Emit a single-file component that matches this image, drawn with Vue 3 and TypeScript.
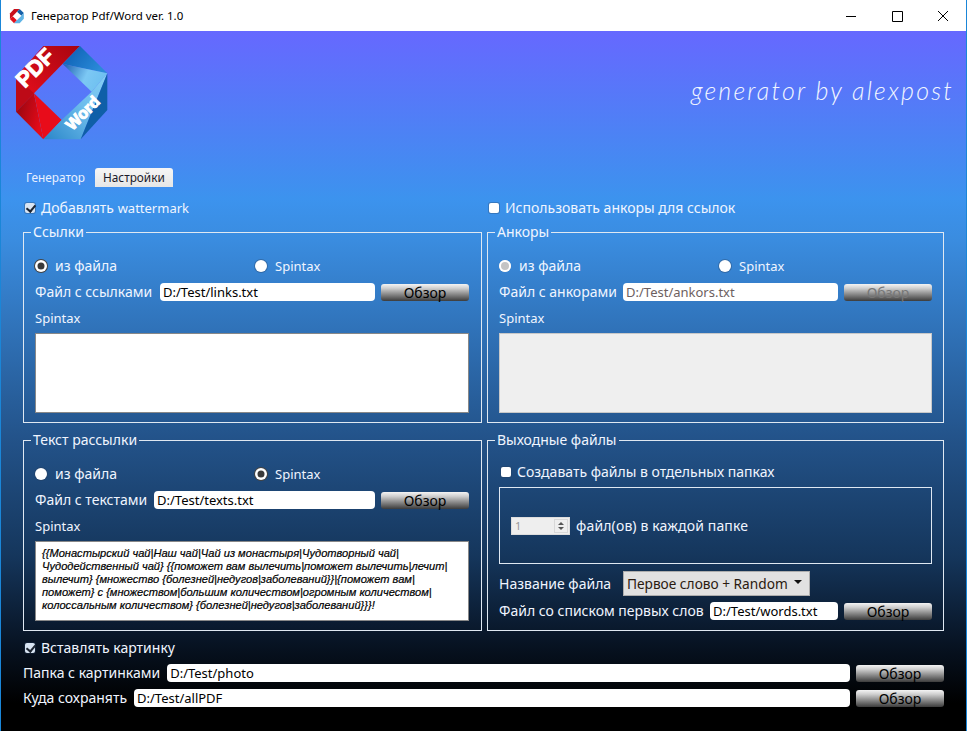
<script setup lang="ts">
const textContent = `{{Монастырский чай|Наш чай|Чай из монастыря|Чудотворный чай|
Чудодейственный чай} {{поможет вам вылечить|поможет вылечить|лечит|
вылечит} {множество {болезней|недугов|заболеваний}}|{поможет вам|
поможет} с {множеством|большим количеством|огромным количеством|
колоссальным количеством} {болезней|недугов|заболеваний}}}!`
const fileName = 'Первое слово + Random'
</script>

<template>
  <div class="win">
    <header class="titlebar">
      <svg class="appicon" viewBox="0 0 315 315">
        <path fill="#c8101c" d="M100 18H210L72 160 18 215V110Z" />
        <path fill="#e0101e" d="M18 215 72 160 155 240 100 298Z" />
        <path fill="#1560a8" d="M210 18 292 100 245 155 158 72Z" />
        <path fill="#5fb4e6" d="M292 100V210L210 298H100L155 240 245 155Z" />
      </svg>
      <span class="wintitle">Генератор Pdf/Word ver. 1.0</span>
      <div class="controls">
        <svg viewBox="0 0 46 30"><path d="M18 15.5H28" stroke="#000" fill="none" /></svg>
        <svg viewBox="0 0 46 30"><path d="M18.5 10.5H28.5V20.500H18.500Z" stroke="#000" fill="none" /></svg>
        <svg viewBox="0 0 46 30"><path d="M18 10 28 20M28 10 18 20" stroke="#000" fill="none" /></svg>
      </div>
    </header>

    <main class="main">
      <section class="hero">
        <svg class="logo" viewBox="0 0 315 315">
          <defs>
            <linearGradient id="r1" x1="0" y1="1" x2="1" y2="0">
              <stop offset="0" stop-color="#f0101e" />
              <stop offset="1" stop-color="#a80510" />
            </linearGradient>
            <linearGradient id="r2" x1="0" y1="0" x2="1" y2="0.4">
              <stop offset="0" stop-color="#8f0610" />
              <stop offset="1" stop-color="#e40a18" />
            </linearGradient>
            <linearGradient id="b1" x1="0" y1="0" x2="1" y2="0.5">
              <stop offset="0" stop-color="#0a5bb0" />
              <stop offset="1" stop-color="#2a8ad8" />
            </linearGradient>
            <linearGradient id="b2" x1="0" y1="0" x2="1" y2="0.3">
              <stop offset="0" stop-color="#1a5cae" />
              <stop offset="0.6" stop-color="#7cc8f4" />
              <stop offset="1" stop-color="#6ec0f0" />
            </linearGradient>
            <linearGradient id="b3" x1="0" y1="1" x2="1" y2="0">
              <stop offset="0" stop-color="#2a86c8" />
              <stop offset="0.55" stop-color="#6cbcec" />
              <stop offset="1" stop-color="#86d0f6" />
            </linearGradient>
          </defs>
          <path fill="url(#r1)" d="M100 18H210L72 160 18 215V110Z" />
          <path fill="#bd0a17" d="M18 110 72 160 18 215Z" />
          <path fill="url(#r2)" d="M18 215 72 160 100 298Z" />
          <path fill="#e80c1a" d="M72 160 155 240 100 298Z" />
          <path fill="url(#b1)" d="M210 18 292 100 158 72Z" />
          <path fill="url(#b2)" d="M158 72 292 100 245 155Z" />
          <path fill="url(#b3)" d="M292 100 212 298H100L155 240 245 155Z" />
          <path fill="#0f5fa8" d="M292 100V210L212 298Z" />
          <text class="pdf" transform="translate(44 146) rotate(-45)">PDF</text>
          <text class="word" transform="translate(187 274) rotate(-45)">Word</text>
        </svg>
        <p class="sign">generator by alexpost</p>
      </section>

      <nav class="tabs">
        <span class="tab">Генератор</span>
        <span class="tab active">Настройки</span>
      </nav>

      <div class="topchecks">
        <label class="check"><input type="checkbox" checked /><span>Добавлять <span class="latin">wattermark</span></span></label>
        <label class="check"><input type="checkbox" /><span>Использовать анкоры для ссылок</span></label>
      </div>

      <div class="groups">
        <fieldset class="group">
          <legend>Ссылки</legend>
          <div class="radios">
            <label class="radio"><input type="radio" name="a" checked /><span>из файла</span></label>
            <label class="radio"><input type="radio" name="a" /><span class="latin">Spintax</span></label>
          </div>
          <div class="filerow">
            <span class="label">Файл с ссылками</span>
            <input class="path w215" value="D:/Test/links.txt" />
            <button class="browse">Обзор</button>
          </div>
          <div class="caption latin">Spintax</div>
          <textarea class="area"></textarea>
        </fieldset>

        <fieldset class="group">
          <legend>Анкоры</legend>
          <div class="radios">
            <label class="radio off"><input type="radio" name="b" checked disabled /><span>из файла</span></label>
            <label class="radio"><input type="radio" name="b" disabled /><span class="latin">Spintax</span></label>
          </div>
          <div class="filerow">
            <span class="label">Файл с анкорами</span>
            <input class="path w215 muted" value="D:/Test/ankors.txt" disabled />
            <button class="browse" disabled>Обзор</button>
          </div>
          <div class="caption latin">Spintax</div>
          <textarea class="area" disabled></textarea>
        </fieldset>

        <fieldset class="group">
          <legend>Текст рассылки</legend>
          <div class="radios">
            <label class="radio"><input type="radio" name="c" /><span>из файла</span></label>
            <label class="radio"><input type="radio" name="c" checked /><span class="latin">Spintax</span></label>
          </div>
          <div class="filerow">
            <span class="label">Файл с текстами</span>
            <input class="path w221" value="D:/Test/texts.txt" />
            <button class="browse">Обзор</button>
          </div>
          <div class="caption latin">Spintax</div>
          <textarea class="area spin" :value="textContent"></textarea>
        </fieldset>

        <fieldset class="group output">
          <legend>Выходные файлы</legend>
          <label class="check inset"><input type="checkbox" /><span>Создавать файлы в отдельных папках</span></label>
          <div class="folderbox">
            <div class="spinner">
              <input value="1" disabled />
              <div class="arrows"><i class="up"></i><i class="down"></i></div>
            </div>
            <span class="label wide">файл(ов) в каждой папке</span>
          </div>
          <div class="namerow">
            <span class="namelabel">Название файла</span>
            <div class="selectwrap">
              <select><option>{{ fileName }}</option></select>
            </div>
          </div>
          <div class="filerow words">
            <span class="label">Файл со списком первых слов</span>
            <input class="path w128" value="D:/Test/words.txt" />
            <button class="browse">Обзор</button>
          </div>
        </fieldset>
      </div>

      <div class="bottom">
        <label class="check"><input type="checkbox" checked /><span>Вставлять картинку</span></label>
        <div class="filerow">
          <span class="label nogrow">Папка с картинками</span>
          <input class="path grow" value="D:/Test/photo" />
          <button class="browse">Обзор</button>
        </div>
        <div class="filerow">
          <span class="label nogrow">Куда сохранять</span>
          <input class="path grow" value="D:/Test/allPDF" />
          <button class="browse">Обзор</button>
        </div>
      </div>
    </main>
  </div>
</template>

<style>
html, body { margin: 0; background: #000; }
</style>

<style scoped>
* { box-sizing: border-box; }
.win {
  width: 967px;
  height: 731px;
  display: flex;
  flex-direction: column;
  border-left: 1px solid #1a86d8;
  border-right: 1px solid #1a86d8;
  font-family: "Noto Sans", "Liberation Sans", sans-serif;
  font-size: 14px;
  color: #f0f5ff;
  overflow: hidden;
}
.latin { font-size: 13px; }
.titlebar {
  height: 31px;
  flex: none;
  display: flex;
  align-items: center;
  background: #fff;
  color: #000;
  padding-left: 8px;
  font-size: 11.5px;
}
.appicon { width: 16px; height: 16px; margin-right: 6px; }
.wintitle { line-height: 31px; }
.controls { margin-left: auto; display: flex; margin-right: 0; }
.controls svg { width: 46px; height: 30px; }
.main {
  flex: 1;
  padding: 0 22px;
  background: linear-gradient(180deg, #6668ff 0%, #3c93ee 24%, #3a8cdf 30%, #23538a 58%, #15365c 75%, #071221 88%, #000 96%);
}
.hero {
  height: 137px;
  display: flex;
  justify-content: space-between;
  position: relative;
}
.logo { width: 105px; height: 105px; margin: 9px 0 0 -13px; }
.pdf { font: 900 66px "Liberation Sans", sans-serif; fill: #fff; stroke: #fff; stroke-width: 3px; }
.word { font: 900 48px "Liberation Sans", sans-serif; fill: #fff; stroke: #fff; stroke-width: 3px; }
.sign {
  margin: 44px -10px 0 0;
  font-family: "Lato", sans-serif;
  font-weight: 300;
  font-style: italic;
  font-size: 25px;
  letter-spacing: 2.200px;
  color: #f2f6ff;
  line-height: 30px;
}
.tabs { height: 19px; display: flex; align-items: stretch; margin-left: 3px; }
.tab { font-size: 11.8px; line-height: 19px; width: 69px; color: #e8f0ff; white-space: nowrap; }
.tab.active {
  width: 78px;
  padding: 0 0 0 8px;
  color: #1a1a2a;
  border-radius: 3px 3px 0 0;
  background: linear-gradient(180deg, #f6f6f6, #e6e6e6);
}
.topchecks { height: 36px; padding-top: 12px; display: grid; grid-template-columns: 464px 1fr; padding-left: 2px; }

.check { display: flex; align-items: center; height: 18px; gap: 6px; line-height: 18px; white-space: nowrap; }
.check.inset { padding-left: 2px; }
.check input {
  appearance: none;
  margin: 0;
  width: 10px;
  height: 10px;
  border-radius: 2px;
  background: #fff;
  box-shadow: 0 0 0 1px rgba(40, 60, 90, .3);
  position: relative;
  flex: none;
}
.check input:checked { background: #d8e4f2; }
.check input:checked::after {
  content: "";
  position: absolute;
  left: 3px;
  top: 0;
  width: 4px;
  height: 7px;
  border: solid #1c2430;
  border-width: 0 2px 2px 0;
  transform: rotate(40deg);
}
.groups { display: grid; grid-template-columns: 459px 457px; gap: 8px 5px; }
.group {
  margin: 0;
  min-width: 0;
  height: 200px;
  border: 1px solid #dfe8f2;
  padding: 16px 11px 0;
}
.group:nth-child(odd) { padding-right: 12px; }
legend { padding: 0 2px; margin-left: -4px; line-height: 18px; height: 18px; }
.radios { display: grid; grid-template-columns: 220px 1fr; height: 18px; }
.radio { display: flex; align-items: center; gap: 8px; line-height: 18px; }
.radio input {
  appearance: none;
  margin: 0;
  width: 12px;
  height: 12px;
  border-radius: 50%;
  background: #fff;
  box-shadow: 0 0 0 1px rgba(40, 60, 90, .35);
}
.radio input:checked { background: #3a3a3a; box-shadow: inset 0 0 0 2.500px #fff, 0 0 0 1px #444; }
.radio.off input:checked { background: #c4c4c4; box-shadow: inset 0 0 0 2px #fff; }
.filerow { display: flex; align-items: flex-end; height: 18px; margin-top: 8px; }
.label { flex: 1; line-height: 18px; white-space: nowrap; align-self: center; }
.label.nogrow { flex: none; width: auto; margin-right: 7px; }
.label.wide { letter-spacing: .15px; }
.path {
  height: 18px;
  border: 0;
  border-radius: 4px;
  background: #fff;
  color: #000;
  padding: 0 3px;
  font: 13px "Noto Sans", "Liberation Sans", sans-serif;
  outline: 0;
}
.path.muted { color: #6d5f5f; opacity: 1; }
.w215 { width: 215px; }
.w221 { width: 221px; }
.w128 { width: 128px; }
.grow { flex: 1; min-width: 0; }
.browse {
  width: 88px;
  height: 17px;
  margin-left: 6px;
  flex: none;
  padding: 0;
  border: 0;
  border-radius: 3px;
  background: linear-gradient(180deg, #f4f4f4 0%, #cfcfcf 25%, #8a8a8a 60%, #3c3c3c 100%);
  color: #000;
  font: 14px/15px "Noto Sans", "Liberation Sans", sans-serif;
}
.browse:disabled { color: #777; }
.caption { height: 18px; margin-top: 8px; line-height: 18px; }
.area {
  display: block;
  width: 100%;
  height: 80px;
  margin-top: 6px;
  border: 1px solid #888;
  background: #fff;
  resize: none;
  outline: 0;
  overflow: hidden;
  padding: 5px 6px;
}
.area:disabled { background: #efefef; border-color: #c8c8c8; }
.area.spin {
  font: italic 11.100px/13px "Liberation Sans", sans-serif;
  -webkit-text-stroke: .2px #000;
  color: #000;
  white-space: pre;
}
.output { padding-top: 14px; }
.folderbox {
  height: 77px;
  margin-top: 6px;
  border: 1px solid #dfe8f2;
  display: flex;
  align-items: center;
  padding-left: 11px;
  gap: 6px;
}
.spinner {
  width: 59px;
  height: 18px;
  display: flex;
  align-items: center;
  background: #eee;
  border: 1px solid #ddd;
}
.spinner input {
  width: 42px;
  border: 0;
  background: transparent;
  font: 11px "Noto Sans", sans-serif;
  color: #999;
  padding: 0 0 0 3px;
}
.arrows {
  width: 14px;
  height: 14px;
  border: 1px solid #d8d8d8;
  display: flex;
  flex-direction: column;
  align-items: center;
  justify-content: space-around;
  padding: 1px 0;
}
.arrows i { width: 0; height: 0; border: 3px solid transparent; }
.arrows .up { border-top: 0; border-bottom: 3px solid #555; }
.arrows .down { border-bottom: 0; border-top: 3px solid #555; }
.namerow { display: flex; align-items: center; height: 25px; margin-top: 7px; }
.namelabel { width: 124px; white-space: nowrap; }
.selectwrap { position: relative; width: 187px; height: 25px; }
.selectwrap::after {
  content: "";
  position: absolute;
  right: 8px;
  top: 9px;
  border: 4px solid transparent;
  border-bottom: 0;
  border-top: 4px solid #111;
}
select {
  appearance: none;
  width: 100%;
  height: 100%;
  border: 1px solid #adadad;
  border-radius: 0;
  background: #e1e1e1;
  color: #2a1a10;
  padding: 0 0 0 3px;
  font: 13.7px "Noto Sans", sans-serif;
}
.words { margin-top: 6px; }
.bottom { padding-top: 8px; }
.bottom .check { padding-left: 2px; }
.bottom .filerow { margin-top: 7px; }
</style>
